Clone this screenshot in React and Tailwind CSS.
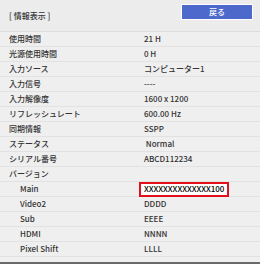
const rows = [
  { label: '使用時間', value: '21 H' },
  { label: '光源使用時間', value: '0 H' },
  { label: '入力ソース', value: 'コンピューター1' },
  { label: '入力信号', value: '----' },
  { label: '入力解像度', value: '1600 x 1200' },
  { label: 'リフレッシュレート', value: '600.00 Hz' },
  { label: '同期情報', value: 'SSPP' },
  { label: 'ステータス', value: ' Normal' },
  { label: 'シリアル番号', value: 'ABCD112234' },
  { label: 'バージョン', value: '' },
  { label: 'Main', value: 'XXXXXXXXXXXXXX100', sub: true, selected: true },
  { label: 'Video2', value: 'DDDD', sub: true },
  { label: 'Sub', value: 'EEEE', sub: true },
  { label: 'HDMI', value: 'NNNN', sub: true },
  { label: 'Pixel Shift', value: 'LLLL', sub: true },
]

function InfoRow({ row }) {
  return (
    <div className="flex h-[15px] items-center border-b border-[#e2e2e2]">
      <span className={`${row.sub ? 'pl-[20px]' : 'pl-[9px]'} w-[139px] shrink-0`}>{row.label}</span>
      {row.selected ? (
        <span className="flex h-[15px] w-[90px] items-center border-2 border-[#e3101c] bg-white pl-[3px] text-black">{row.value}</span>
      ) : (
        <span className="pl-[5px] whitespace-pre">{row.value}</span>
      )}
    </div>
  )
}

export default function App() {
  return (
    <div className="flex h-[264px] w-[260px] flex-col bg-[#efefef] text-[8px] font-medium leading-none text-[#333] [font-family:'Noto_Sans_CJK_JP','Noto_Sans',sans-serif]">
      <div className="flex h-[32px] shrink-0 justify-between border-b border-[#dcdcdc] bg-[#ececec] pl-[9px] pr-[7px]">
        <span className="mt-[12px]">[ 情報表示 ]</span>
        <button className="mt-[4px] h-[16px] w-[72px] border border-white bg-[#4d69cb] text-white">戻る</button>
      </div>
      <div className="flex flex-col">
        {rows.map(r => (
          <InfoRow key={r.label} row={r} />
        ))}
      </div>
      <div className="flex-1" />
      <div className="h-[2px] bg-[#6a6a6a]" />
    </div>
  )
}
